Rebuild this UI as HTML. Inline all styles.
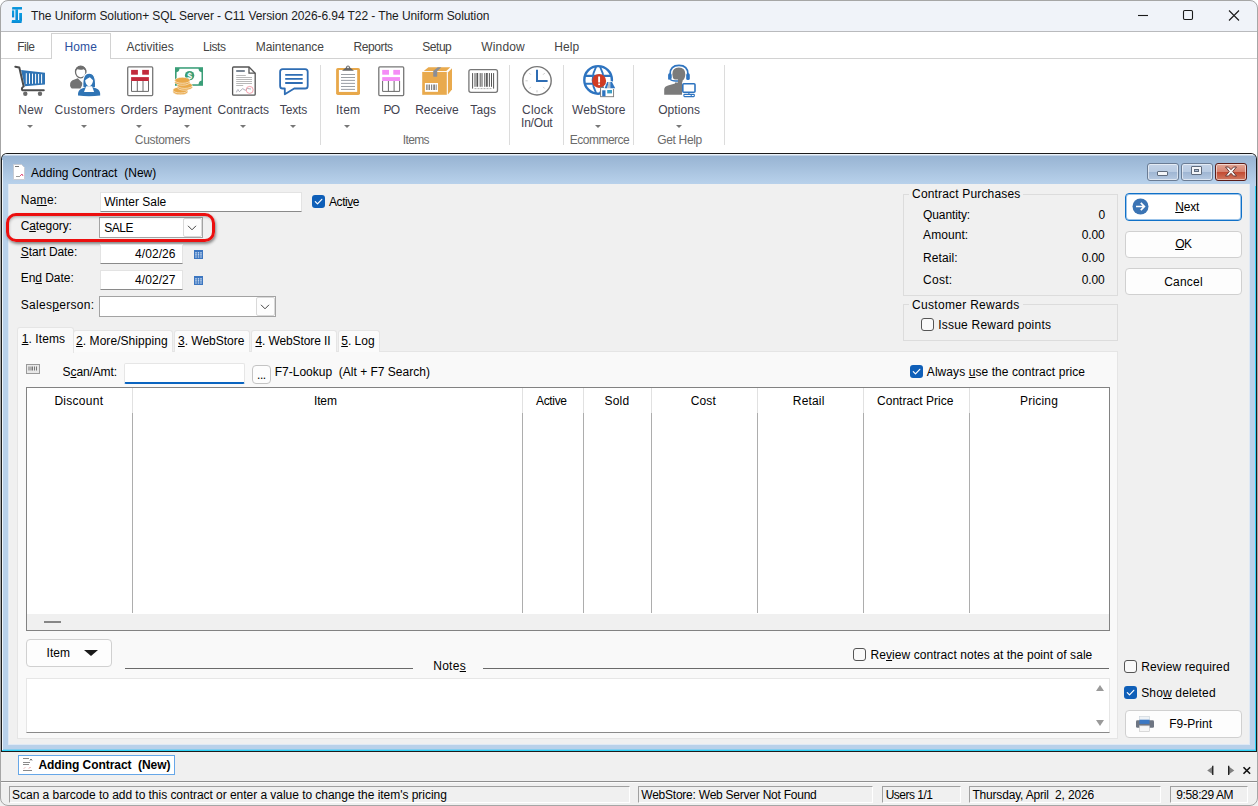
<!DOCTYPE html>
<html>
<head>
<meta charset="utf-8">
<title>The Uniform Solution</title>
<style>
*{box-sizing:border-box;margin:0;padding:0}
html,body{width:1258px;height:806px;overflow:hidden;background:#fff}
body{font-family:"Liberation Sans",sans-serif;font-size:12px;color:#000;position:relative}
.a{position:absolute}
.t{position:absolute;white-space:nowrap;line-height:14px;height:14px}
.c{text-align:center}
.r{text-align:right}
u{text-decoration:underline;text-underline-offset:1px}
/* title bar */
#titlebar{left:0;top:0;width:1258px;height:31px;background:#f0f3f9;border-radius:8px 8px 0 0}
#titleline{left:0;top:31px;width:1258px;height:1px;background:#b9babd}
.seg{font-family:"Liberation Sans",sans-serif;font-size:12px;color:#1b1b1b}
/* menu */
.m{color:#444;font-size:12px;top:40px}
#hometab{left:51px;top:33px;width:60px;height:26px;border:1px solid #d2d2d2;border-bottom:none;background:#fff}
.mline{height:1px;background:#d2d2d2;top:58px}
/* ribbon */
.rl{color:#43434f;font-size:12px;top:103px}
.gl{color:#6b6b6b;font-size:12px;top:133px}
.sep{width:1px;background:#dcdcdc;top:65px;height:80px}
.dd{width:0;height:0;border-left:3px solid transparent;border-right:3px solid transparent;border-top:3px solid #777;top:125px}
/* child window */
#child{left:2px;top:153px;width:1255px;height:599px;background:#b9d1ea}
/* form */
.f{font-size:12px;color:#000}
.inp{background:#fff;border:1px solid #e3e3e3;border-bottom:1px solid #8a8a8a}
.btn{background:#fdfdfd;border:1px solid #d0d0d0;border-radius:4px}
.cb{width:13px;height:13px;border:1px solid #555;border-radius:3px;background:#f9f9f9}
.cbc{width:13px;height:13px;border-radius:3px;background:#0f5fb8}
.grp{border:1px solid #dcdcdc}
.vl{width:1px;background:#adadad;top:388px;height:225px}
.sb{font-size:12px;color:#000;top:788px}
.sunk{border:1px solid;border-color:#a0a0a0 #fff #fff #a0a0a0;top:786px;height:17px}

.capb{top:163px;width:32px;height:18px;border:1px solid #6a7c94;border-radius:3px;background:linear-gradient(#c4d4e8 0,#b9cbe2 48%,#9fb6d3 52%,#b6c9e1 100%);box-shadow:inset 0 0 0 1px rgba(255,255,255,.55)}
.capx{border-color:#5a1c18;background:linear-gradient(#e3a898 0,#d6826f 48%,#c24a32 52%,#d17a62 100%)}
.tab{top:330px;height:22px;background:#fbfbfb;border:1px solid #e5e5e5;border-bottom:none;border-radius:3px 3px 0 0}
.vh{width:1px;background:#e1e1e1;top:388px;height:25px}
/*AUTO*/
#title,#m_File,#m_Home,#m_Activities,#m_Lists,#m_Maintenance,#m_Reports,#m_Setup,#m_Window,#m_Help,#x1,#x2,#x3,#x4,#x5,#x6,#x7,#x8,#x9,#x10,#x11,#x12,#x13,#x14,#x15,#x16,#x17,#x18,#ctitle,#x19,#x20,#x21,#x22,#x23,#x24,#x25,#x26,#x27,#x28,#x29,#x30,#x31,#x32,#x33,#x34,#x35,#x36,#x37,#x38,#x39,#x40,#x41,#x42,#x43,#x44,#x45,#x46,#x47,#x48,#x50,#x51,#x52,#x53,#x54,#x55,#x56,#x57,#x58,#x59,#x60,#x61,#x62,#x63,#x64,#x65,#tasktab,#sb1,#sb2,#sb3,#sb4,#sb5{width:auto !important;text-align:left !important}
#title{left:31.0px !important;letter-spacing:-0.077px}
#m_File{left:17.2px !important;letter-spacing:-0.515px}
#m_Home{left:64.4px !important;letter-spacing:0.195px}
#m_Activities{left:126.4px !important;letter-spacing:0.006px}
#m_Lists{left:203.0px !important;letter-spacing:-0.422px}
#m_Maintenance{left:255.7px !important;letter-spacing:-0.052px}
#m_Reports{left:353.6px !important;letter-spacing:-0.422px}
#m_Setup{left:422.3px !important;letter-spacing:-0.465px}
#m_Window{left:481.3px !important;letter-spacing:0.162px}
#m_Help{left:554.3px !important;letter-spacing:0.071px}
#x1{left:18.3px !important;letter-spacing:0.192px}
#x2{left:54.4px !important;letter-spacing:0.323px}
#x3{left:120.8px !important;letter-spacing:0.042px}
#x4{left:164.1px !important;letter-spacing:0.023px}
#x5{left:217.5px !important;letter-spacing:0.030px}
#x6{left:279.8px !important;letter-spacing:-0.129px}
#x7{left:336.0px !important;letter-spacing:0.252px}
#x8{left:383.4px !important;letter-spacing:-0.644px}
#x9{left:415.2px !important;letter-spacing:0.007px}
#x10{left:470.3px !important;letter-spacing:0.114px}
#x11{left:522.0px !important;letter-spacing:0.246px}
#x12{left:521.0px !important;letter-spacing:-0.197px}
#x13{left:572.1px !important;letter-spacing:0.037px}
#x14{left:658.2px !important;letter-spacing:0.073px}
#x15{left:134.8px !important;letter-spacing:-0.314px}
#x16{left:402.8px !important;letter-spacing:-0.661px}
#x17{left:569.7px !important;letter-spacing:-0.489px}
#x18{left:657.2px !important;letter-spacing:-0.323px}
#ctitle{left:31.0px !important;letter-spacing:0.028px}
#x19{left:20.7px !important;letter-spacing:0.285px}
#x20{left:104.3px !important;letter-spacing:-0.003px}
#x21{left:329.1px !important;letter-spacing:-0.481px}
#x22{left:20.7px !important;letter-spacing:-0.106px}
#x23{left:104.3px !important;letter-spacing:-0.496px}
#x24{left:20.7px !important;letter-spacing:-0.078px}
#x25{left:135.1px !important;letter-spacing:0.059px}
#x26{left:20.7px !important;letter-spacing:-0.036px}
#x27{left:135.1px !important;letter-spacing:0.059px}
#x28{left:20.7px !important;letter-spacing:0.302px}
#x29{left:909.1px !important;letter-spacing:0.165px}
#x30{left:923.1px !important;letter-spacing:-0.116px}
#x31{left:923.1px !important;letter-spacing:0.066px}
#x32{left:923.1px !important;letter-spacing:0.064px}
#x33{left:923.1px !important;letter-spacing:0.271px}
#x34{left:1098.4px !important;letter-spacing:-0.488px}
#x35{left:1081.7px !important;letter-spacing:-0.153px}
#x36{left:1081.7px !important;letter-spacing:-0.153px}
#x37{left:1081.7px !important;letter-spacing:-0.153px}
#x38{left:909.1px !important;letter-spacing:0.300px}
#x39{left:938.2px !important;letter-spacing:0.226px}
#x40{left:1175.2px !important;letter-spacing:-0.196px}
#x41{left:1175.2px !important;letter-spacing:-0.659px}
#x42{left:1164.2px !important;letter-spacing:0.208px}
#x43{left:21.7px !important;letter-spacing:0.100px}
#x44{left:76.1px !important;letter-spacing:0.051px}
#x45{left:178.0px !important;letter-spacing:-0.010px}
#x46{left:255.4px !important;letter-spacing:-0.100px}
#x47{left:341.2px !important;letter-spacing:0.002px}
#x48{left:62.6px !important;letter-spacing:-0.122px}
#x50{left:274.7px !important;letter-spacing:0.005px}
#x51{left:926.8px !important;letter-spacing:0.075px}
#x52{left:54.4px !important;letter-spacing:0.273px}
#x53{left:314.0px !important;letter-spacing:-0.148px}
#x54{left:536.0px !important;letter-spacing:-0.338px}
#x55{left:604.5px !important;letter-spacing:0.190px}
#x56{left:690.7px !important;letter-spacing:0.171px}
#x57{left:792.8px !important;letter-spacing:0.163px}
#x58{left:877.0px !important;letter-spacing:0.028px}
#x59{left:1020.0px !important;letter-spacing:0.202px}
#x60{left:46.6px !important;letter-spacing:0.052px}
#x61{left:433.2px !important;letter-spacing:0.285px}
#x62{left:870.6px !important;letter-spacing:0.054px}
#x63{left:1141.2px !important;letter-spacing:0.120px}
#x64{left:1141.2px !important;letter-spacing:0.151px}
#x65{left:1169.2px !important;letter-spacing:0.030px}
#tasktab{left:38.4px !important;letter-spacing:-0.063px}
#sb1{left:12.1px !important;letter-spacing:-0.038px}
#sb2{left:641.3px !important;letter-spacing:-0.235px}
#sb3{left:885.7px !important;letter-spacing:-0.520px}
#sb4{left:972.4px !important;letter-spacing:-0.181px}
#sb5{left:1176.3px !important;letter-spacing:-0.380px}
/*ENDAUTO*/
</style>
</head>
<body>
<!-- TITLE BAR -->
<div class="a" id="titlebar"></div>
<div class="a" id="titleline"></div>
<div class="t seg" style="left:31px;top:9px" id="title">The Uniform Solution+ SQL Server - C11 Version 2026-6.94 T22 - The Uniform Solution</div>

<svg class="a" style="left:11px;top:6px" width="12" height="18" viewBox="11 6 12 18"><defs><linearGradient id="lg" x1="0" y1="0" x2="0" y2="1"><stop offset="0" stop-color="#0a9fe3"/><stop offset="1" stop-color="#0b86d2"/></linearGradient></defs><g fill="url(#lg)"><path d="M12.300 7H22V9.500H12z"/><rect x="12" y="10.400" width="2.200" height="7"/><rect x="15.400" y="9.400" width="2.600" height="11"/><rect x="19.200" y="13" width="2.800" height="8"/><path d="M12 20H22L21.500 23H11.500z"/></g></svg>
<!-- window controls -->
<svg class="a" style="left:1130px;top:5px" width="120" height="22" viewBox="1130 5 120 22"><path d="M1138 15.500h10" stroke="#1a1a1a" stroke-width="1.100"/><rect x="1183.500" y="10.500" width="9" height="9" rx="1.200" fill="none" stroke="#1a1a1a" stroke-width="1.100"/><path d="M1229 10.500l10 10M1239 10.500l-10 10" stroke="#1a1a1a" stroke-width="1.100"/></svg>
<!-- MENU -->
<div class="a mline" style="left:0;width:52px"></div>
<div class="a mline" style="left:110px;width:1148px"></div>
<div class="a" id="hometab"></div>
<div class="t m" id="m_File" style="left:17px">File</div>
<div class="t m" id="m_Home" style="left:64px;color:#2b4f9e">Home</div>
<div class="t m" id="m_Activities" style="left:126px">Activities</div>
<div class="t m" id="m_Lists" style="left:203px">Lists</div>
<div class="t m" id="m_Maintenance" style="left:255px">Maintenance</div>
<div class="t m" id="m_Reports" style="left:353px">Reports</div>
<div class="t m" id="m_Setup" style="left:421px">Setup</div>
<div class="t m" id="m_Window" style="left:481px">Window</div>
<div class="t m" id="m_Help" style="left:554px">Help</div>

<!-- RIBBON -->

<!-- ribbon labels -->
<div id="x1" class="t rl c" style="left:0;width:60px">New</div>
<div id="x2" class="t rl c" style="left:44px;width:80px">Customers</div>
<div id="x3" class="t rl c" style="left:110px;width:60px">Orders</div>
<div id="x4" class="t rl c" style="left:158px;width:60px">Payment</div>
<div id="x5" class="t rl c" style="left:203px;width:80px">Contracts</div>
<div id="x6" class="t rl c" style="left:263px;width:60px">Texts</div>
<div id="x7" class="t rl c" style="left:317px;width:60px">Item</div>
<div id="x8" class="t rl c" style="left:361px;width:60px">PO</div>
<div id="x9" class="t rl c" style="left:407px;width:60px">Receive</div>
<div id="x10" class="t rl c" style="left:453px;width:60px">Tags</div>
<div id="x11" class="t rl c" style="left:507px;width:60px">Clock</div>
<div id="x12" class="t rl c" style="left:507px;width:60px;top:116px">In/Out</div>
<div id="x13" class="t rl c" style="left:558px;width:80px">WebStore</div>
<div id="x14" class="t rl c" style="left:649px;width:60px">Options</div>
<div class="a dd" style="left:27px"></div>
<div class="a dd" style="left:81px"></div>
<div class="a dd" style="left:136px"></div>
<div class="a dd" style="left:184px"></div>
<div class="a dd" style="left:240px"></div>
<div class="a dd" style="left:290px"></div>
<div class="a dd" style="left:344px"></div>
<div class="a dd" style="left:595px"></div>
<div class="a dd" style="left:676px"></div>
<div id="x15" class="t gl c" style="left:122px;width:80px">Customers</div>
<div id="x16" class="t gl c" style="left:376px;width:80px">Items</div>
<div id="x17" class="t gl c" style="left:559px;width:80px">Ecommerce</div>
<div id="x18" class="t gl c" style="left:639px;width:80px">Get Help</div>
<div class="a sep" style="left:320px"></div>
<div class="a sep" style="left:509px"></div>
<div class="a sep" style="left:563px"></div>
<div class="a sep" style="left:633px"></div>
<div class="a sep" style="left:724px"></div>
<!-- ICONS -->

<!-- cart : origin (14,64) -->
<svg class="a" style="left:14px;top:64px" width="34" height="34" viewBox="14 64 34 34">
<path d="M21.100 69.900L45 72.700V84.600L24.700 86.200z" fill="#2f74b5"/>
<path d="M26.300 73.200v10.800M29.500 73.400v10.400M32.500 73.600v10.200M35.600 73.800v9.800M38.600 74v9.400M41.600 74.200v9.200" stroke="#fff" stroke-width="1"/>
<path d="M15.300 66.800L19.300 67.600 23.700 86.500Q21 88 22.300 90.200H43.800" fill="none" stroke="#4d4d4d" stroke-width="2" stroke-linecap="round" stroke-linejoin="round"/>
<circle cx="25.300" cy="93.800" r="2.200" fill="#6a6a6a"/><circle cx="40" cy="93.800" r="2.200" fill="#6a6a6a"/>
</svg>
<!-- customers -->
<svg class="a" style="left:68px;top:64px" width="34" height="34" viewBox="68 64 34 34">
<path d="M77.800 78.300L72.500 80.300Q69.800 81.800 70.100 85.400Q70.400 88.300 73 88.600L80.500 88.400 83 83.500z" fill="#737373"/>
<ellipse cx="80.700" cy="72" rx="5.200" ry="5.800" fill="#fff" stroke="#6e6e6e" stroke-width="1.300"/>
<path d="M75.300 72.500Q74.800 66 80.700 66Q86.600 66 86.100 72.500Q85.500 70 83.800 69.200Q80.500 70.300 77.300 69.300Q75.800 70.300 75.300 72.500z" fill="#6e6e6e"/>
<path d="M82.900 87.500Q82 73.100 89.200 73.100Q96.400 73.100 95.500 87.500z" fill="#2f74b5" stroke="#fff" stroke-width="1.100"/>
<path d="M78 95.600Q77.600 90 82 88.600L86.500 86.800H91.900L96.400 88.600Q100.600 90 100.200 95.600Q89 96.800 78 95.600z" fill="#2f74b5"/>
<path d="M85.200 80.200Q87 78.600 89.800 77.300Q91.500 78.800 93 80.200Q93 84.700 89.100 86.400Q85.200 84.700 85.200 80.200z" fill="#fff"/>
<path d="M84 92L86.200 86.300H92.100L94.100 92z" fill="#fff"/>
</svg>
<!-- orders -->
<svg class="a" style="left:126px;top:65px" width="29" height="32" viewBox="126 65 29 32">
<rect x="127.700" y="66.900" width="25" height="28.700" rx="1" fill="#fff" stroke="#777" stroke-width="1.300"/>
<rect x="131.100" y="69.900" width="6.800" height="4.800" fill="#c22a3c"/><rect x="142.200" y="69.900" width="6.700" height="4.800" fill="#c22a3c"/>
<rect x="131.100" y="77.100" width="17.800" height="3.900" fill="#c22a3c"/>
<path d="M131.500 81v10.400h17V81M137.300 81v10.400M143 81v10.400" fill="none" stroke="#6a6a6a" stroke-width="1"/>
</svg>
<!-- payment -->
<svg class="a" style="left:172px;top:65px" width="33" height="32" viewBox="172 65 33 32">
<rect x="175" y="67.200" width="28" height="18.600" fill="#3a9e78"/>
<path d="M179.500 68.800H198.500Q199 72 201.500 72.200V80.600Q199 81 198.500 84.200H179.500Q179 81 176.600 80.600V72.200Q179 72 179.500 68.800z" fill="#fff"/>
<circle cx="189.600" cy="75.600" r="4.700" fill="#3a9e78"/>
<text x="189.600" y="79" font-size="8.500" font-weight="bold" text-anchor="middle" fill="#fff" font-family="Liberation Sans, sans-serif">$</text>
<g fill="#e9a94a" stroke="#fff" stroke-width=".55">
<ellipse cx="180.400" cy="91.800" rx="7.600" ry="3"/><ellipse cx="180.400" cy="90" rx="7.600" ry="3"/>
<ellipse cx="184.800" cy="87.200" rx="7.600" ry="3"/><ellipse cx="184.800" cy="85.400" rx="7.600" ry="3"/>
<ellipse cx="182.400" cy="82.200" rx="7.600" ry="3"/><ellipse cx="182.400" cy="80.300" rx="7.600" ry="3"/>
</g>
</svg>
<!-- contracts -->
<svg class="a" style="left:230px;top:65px" width="28" height="32" viewBox="230 65 28 32">
<path d="M233.600 67H249L255.200 73.200V94.200Q255.200 95.200 254.200 95.200H233.600Q232.600 95.200 232.600 94.200V68Q232.600 67 233.600 67z" fill="#fff" stroke="#555" stroke-width="1.300"/>
<path d="M249 67V73.200H255.200" fill="none" stroke="#555" stroke-width="1.300"/>
<path d="M236.200 71h8.600" stroke="#73808f" stroke-width="1.900"/>
<path d="M236.200 75.500h9.600M236.200 77.500h15.800M236.200 79.500h15.800M236.200 81.500h15.800M236.200 83.500h15.800M236.200 85.500h7" stroke="#a7a7a7" stroke-width=".8"/>
<path d="M236.500 92.300Q238 88 238.500 90.500T241 90.200T244 89.500T247.500 88.500L251 89" fill="none" stroke="#8a8a98" stroke-width=".7"/>
<circle cx="249.700" cy="89.900" r="3.500" fill="none" stroke="#f08a9a" stroke-width=".8"/>
</svg>
<!-- texts -->
<svg class="a" style="left:277px;top:66px" width="34" height="31" viewBox="277 66 34 31">
<path d="M282.700 69.200H305.100Q307.700 69.200 307.700 71.800V85.900Q307.700 88.500 305.100 88.500H294.200L284.800 94.300V88.500H282.700Q280.100 88.500 280.100 85.900V71.800Q280.100 69.200 282.700 69.200z" fill="#fff" stroke="#2e6db4" stroke-width="1.800" stroke-linejoin="round"/>
<path d="M285.200 74.900h17.500M285.200 78.900h17.500M285.200 83h17.500" stroke="#2e6db4" stroke-width="1.800"/>
</svg>
<!-- item clipboard -->
<svg class="a" style="left:335px;top:64px" width="27" height="33" viewBox="335 64 27 33">
<rect x="336.100" y="68" width="23.900" height="27" rx="1.800" fill="#e8a84a"/>
<rect x="338.900" y="70" width="18.300" height="21.900" fill="#fff"/>
<path d="M342 70.800L346 67.500Q346.200 65.500 348 65.500T350 67.500L354 70.800z" fill="#666"/>
<circle cx="348" cy="67.300" r=".9" fill="#fff"/>
<path d="M341 74.500h14M341 77.500h14M341 80.400h14M341 83.400h14M341 86.500h14M341 89.400h14" stroke="#8f949b" stroke-width=".9"/>
</svg>
<!-- PO -->
<svg class="a" style="left:377px;top:65px" width="29" height="32" viewBox="377 65 29 32">
<rect x="378.800" y="66.900" width="24.900" height="28.700" rx="1" fill="#fff" stroke="#777" stroke-width="1.300"/>
<rect x="382.200" y="69.900" width="6.800" height="4.800" fill="#f48cf6"/><rect x="393.300" y="69.900" width="6.700" height="4.800" fill="#f48cf6"/>
<rect x="382.200" y="77.100" width="17.800" height="3.900" fill="#f48cf6"/>
<path d="M382.600 81v10.400h17V81M388.400 81v10.400M394.100 81v10.400" fill="none" stroke="#6a6a6a" stroke-width="1"/>
</svg>
<!-- receive box -->
<svg class="a" style="left:421px;top:66px" width="32" height="30" viewBox="421 66 32 30">
<path d="M422.200 71.900H446.800V94.800H422.200z" fill="#e9aa4d"/>
<path d="M423.800 70.900L428.400 67.200H450.400L446.300 70.900z" fill="#e9aa4d"/>
<path d="M447.900 72.400L452 68.300V89.400L447.900 94.600z" fill="#e9aa4d"/>
<path d="M437.800 67.200H441.400L437.200 70.900V76.400Q435.200 77.200 433.200 76.400V70.900z" fill="#8a8e96"/>
<rect x="424.900" y="83" width="13.100" height="8.800" fill="#fff"/>
<path d="M426.700 84.500v5.500M428 84.500v5.500M429.500 84.500v5.500M431.500 84.500v5.500M433.300 84.500v5.500M434.500 84.500v5.500M436.200 84.500v5.500" stroke="#777" stroke-width=".9"/>
</svg>
<!-- tags -->
<svg class="a" style="left:467px;top:68px" width="33" height="27" viewBox="467 68 33 27">
<rect x="468.900" y="69.700" width="28.600" height="22.600" rx="2" fill="#fff" stroke="#777" stroke-width="1.300"/>
<path d="M472.600 73.100v15.500M493.600 73.100v15.500" stroke="#555" stroke-width="1"/>
<path d="M475 73.100v13.700M480.200 73.100v13.700M482 73.100v13.700M484.800 73.100v13.700M489.400 73.100v13.700M491.500 73.100v13.700" stroke="#555" stroke-width="1"/>
<path d="M477.300 73.100v13.700M486.900 73.100v13.700" stroke="#555" stroke-width="1.700"/>
<path d="M474.500 88.600h17.500" stroke="#999" stroke-width=".8" stroke-dasharray="2 1"/>
</svg>
<!-- clock -->
<svg class="a" style="left:521px;top:65px" width="32" height="32" viewBox="521 65 32 32">
<circle cx="537" cy="80.800" r="14.200" fill="#fff" stroke="#777" stroke-width="1.400"/>
<path d="M529.300 73.100l1.600 1.600M544.700 73.100l-1.600 1.600M529.300 88.500l1.600-1.600M544.700 88.500l-1.600-1.600M525.500 80.800h2.200M537 90.200v2.200" stroke="#c9c9c9" stroke-width="1"/>
<path d="M537 69.700V81H547.600" fill="none" stroke="#2e6db4" stroke-width="2"/>
</svg>
<!-- webstore -->
<svg class="a" style="left:582px;top:64px" width="34" height="34" viewBox="582 64 34 34">
<circle cx="598.100" cy="79.900" r="13.800" fill="#fff" stroke="#2e74c0" stroke-width="2.400"/>
<path d="M585 75.900h26.200M585 83.800h26.200" stroke="#2e74c0" stroke-width="2.100"/>
<path d="M596.200 66.500Q589 80 596.200 93.300M600 66.500Q607.200 80 600 93.300" fill="none" stroke="#2e74c0" stroke-width="1.800"/>
<circle cx="599.100" cy="80.900" r="7" fill="#d13b22"/>
<path d="M599.100 76.500v6" stroke="#fff" stroke-width="1.900"/><rect x="598.200" y="83.500" width="1.800" height="1.600" fill="#fff"/>
<rect x="600.600" y="87.500" width="13" height="9.200" fill="#fff" stroke="#777" stroke-width=".9"/>
<path d="M604.600 88.300L607.200 82H612L615.200 88.300z" fill="#fff" stroke="#fff" stroke-width="1.600"/>
<path d="M604.600 88.300L607.200 82H608.600L607.200 88.300z" fill="#2e74c0"/><path d="M607.200 88.300L608.600 82H610.300L610.300 88.300z" fill="#b8bcc4"/><path d="M610.300 88.300V82H612L615.200 88.300z" fill="#2e74c0"/>
<rect x="602.200" y="90.300" width="3.300" height="6" fill="#2e74c0"/>
<rect x="607.200" y="90" width="4.800" height="3.400" fill="#3a9ec6"/>
</svg>
<!-- options -->
<svg class="a" style="left:662px;top:64px" width="36" height="34" viewBox="662 64 36 34">
<path d="M664.200 94.800V89.500Q664.200 86.500 668 85.500L675 83.500V80.500Q672.300 78.200 672.300 74.200Q672.300 67.600 678.800 67.600Q685.300 67.600 685.300 74.200Q685.300 78.500 682.500 80.800V83.500H682V94.800z" fill="#7b7b7b"/>
<path d="M670.100 75.500V74Q670.100 65.300 679 65.300Q687.900 65.300 687.900 74V75.500" fill="none" stroke="#2e74c0" stroke-width="1.700"/>
<rect x="668.100" y="73.300" width="3.600" height="6.800" rx="1.600" fill="#2e74c0"/><rect x="686.200" y="73.300" width="3.600" height="6.800" rx="1.600" fill="#2e74c0"/>
<path d="M670.300 79.200Q671.300 81 675.500 81H678" fill="none" stroke="#fff" stroke-width="3"/>
<path d="M670.300 79.200Q671.300 81 675.500 81H678" fill="none" stroke="#2e74c0" stroke-width="1.300"/>
<rect x="682" y="82.300" width="15.200" height="11.200" fill="#fff"/>
<rect x="682.800" y="83.700" width="12.200" height="8.600" rx="1" fill="#fff" stroke="#2e74c0" stroke-width="1.600"/>
<rect x="683.900" y="94.400" width="10.400" height="2.200" rx=".6" fill="#fff" stroke="#2e74c0" stroke-width="1.100"/>
<path d="M688.900 92.300v2M691.200 94.400v2.200" stroke="#2e74c0" stroke-width="1.100"/>
</svg>



<!-- CHILD WINDOW -->

<!-- CHILD WINDOW FRAME -->
<div class="a" style="left:1px;top:153px;width:1256px;height:599px;background:#1c1c1c;border-radius:6px 6px 0 0"></div>
<div class="a" style="left:2px;top:154px;width:1254px;height:597px;background:#b9d1ea;border-radius:5px 5px 0 0"></div>
<div class="a" style="left:2px;top:154px;width:1254px;height:31px;border-radius:5px 5px 0 0;background:linear-gradient(#eaf1f9 0,#eaf1f9 1px,#98b4d3 2px,#a3bedb 12px,#afc9e4 22px,#b8d1eb 30px)"></div>
<div class="a" style="left:2px;top:749px;width:1254px;height:1px;background:#86cdee"></div><div class="a" style="left:2px;top:750px;width:1254px;height:1px;background:#2fd2f6"></div><div class="a" style="left:1255px;top:186px;width:1px;height:565px;background:#2fd2f6"></div><div class="a" style="left:2px;top:160px;width:1px;height:590px;background:#eef5fc"></div>
<!-- client -->
<div class="a" style="left:8px;top:184px;width:1242px;height:561px;background:#dfe9f5"></div>
<div class="a" style="left:9px;top:184px;width:1240px;height:560px;background:#f0f0f0"></div>
<!-- child title -->
<div class="t" style="left:31px;top:166px;font-size:12px;color:#000" id="ctitle">Adding Contract&nbsp; (New)</div>
<svg class="a" style="left:12px;top:164px" width="14" height="16" viewBox="0 0 14 16"><path d="M1.5 .5h8l3 3v12h-11z" fill="#fff" stroke="#c8ccd4" stroke-width="1"/><path d="M3 2.5h4" stroke="#777" stroke-width="1"/><path d="M4 12.5h4" stroke="#999" stroke-width="1"/><path d="M8 12l2-2 1 2" stroke="#e0507a" stroke-width="1" fill="none"/></svg>
<!-- caption buttons -->
<div class="a capb" style="left:1147px"></div>
<div class="a capb" style="left:1181px"></div>
<div class="a capb capx" style="left:1215px"></div>
<div class="a" style="left:1157px;top:171px;width:11px;height:5px;background:#f4f6f9;border:1px solid #5f6b7c;border-radius:1px"></div>
<div class="a" style="left:1191px;top:166px;width:11px;height:9px;background:#f4f6f9;border:1px solid #5f6b7c;border-radius:1px"></div>
<div class="a" style="left:1194px;top:169px;width:5px;height:3px;background:#aebcd0;border:1px solid #5f6b7c"></div>
<svg class="a" style="left:1224px;top:166px" width="14" height="11" viewBox="0 0 14 11"><path d="M1.5 1h3L7 3.7 9.500 1h3L8.800 5.500 12.500 10h-3L7 7.300 4.500 10h-3L5.200 5.500z" fill="#f6f6f6" stroke="#6b3a36" stroke-width="1" stroke-linejoin="round"/></svg>

<!-- FORM -->
<div id="x19" class="t f" style="left:20px;top:193px">Na<u>m</u>e:</div>
<div class="a inp" style="left:100px;top:192px;width:202px;height:20px"></div>
<div id="x20" class="t f" style="left:104px;top:195px">Winter Sale</div>
<div class="a cbc" style="left:312px;top:195px"></div>
<svg class="a" style="left:312px;top:195px" width="13" height="13" viewBox="0 0 13 13"><path d="M3.300 6.700l2.200 2.200 4.300-4.600" fill="none" stroke="#fff" stroke-width="1.200" stroke-linecap="round" stroke-linejoin="round"/></svg>
<div id="x21" class="t f" style="left:329px;top:195px">Acti<u>v</u>e</div>

<div id="x22" class="t f" style="left:20px;top:219px">C<u>a</u>tegory:</div>
<div class="a" style="left:99px;top:217px;width:104px;height:21px;background:#fff;border:1px solid #a3a3a3"></div>
<div class="a" style="left:183px;top:218px;width:19px;height:19px;background:#fdfdfd;border:1px solid #d9d9d9;border-radius:2px"></div>
<svg class="a" style="left:187px;top:225px" width="10" height="6" viewBox="0 0 10 6"><path d="M1 .8l4 4 4-4" fill="none" stroke="#444" stroke-width="1"/></svg>
<div id="x23" class="t f" style="left:104px;top:221px">SALE</div>
<!-- red highlight -->
<div class="a" style="left:6px;top:213px;width:209px;height:29px;border:3px solid #ec0f0f;border-radius:10px;box-shadow:1px 2px 3px rgba(0,0,0,.45),inset 1px 2px 3px -1px rgba(0,0,0,.3)"></div>

<div id="x24" class="t f" style="left:20px;top:245px"><u>S</u>tart Date:</div>
<div class="a inp" style="left:100px;top:244px;width:83px;height:20px"></div>
<div id="x25" class="t f r" style="left:100px;width:76px;top:247px">4/02/26</div>
<div id="x26" class="t f" style="left:20px;top:271px">En<u>d</u> Date:</div>
<div class="a inp" style="left:100px;top:270px;width:83px;height:20px"></div>
<div id="x27" class="t f r" style="left:100px;width:76px;top:273px">4/02/27</div>
<svg class="a cal" style="left:193px;top:249px" width="10" height="10" viewBox="0 0 10 10"><rect x="1" y="1" width="9" height="9" fill="#3c76c0"/><path d="M2.300 3.800h1.400M4.800 3.800h1.400M7.300 3.800h1.400M2.300 5.900h1.400M4.800 5.900h1.400M7.300 5.900h1.400M2.300 8h1.400M4.800 8h1.400M7.300 8h1.400" stroke="#eaf2fb" stroke-width="1.200"/></svg>
<svg class="a cal" style="left:193px;top:275px" width="10" height="10" viewBox="0 0 10 10"><rect x="1" y="1" width="9" height="9" fill="#3c76c0"/><path d="M2.300 3.800h1.400M4.800 3.800h1.400M7.300 3.800h1.400M2.300 5.900h1.400M4.800 5.900h1.400M7.300 5.900h1.400M2.300 8h1.400M4.800 8h1.400M7.300 8h1.400" stroke="#eaf2fb" stroke-width="1.200"/></svg>

<div id="x28" class="t f" style="left:20px;top:298px">Sales<u>p</u>erson:</div>
<div class="a" style="left:99px;top:296px;width:177px;height:21px;background:#fff;border:1px solid #a3a3a3"></div>
<div class="a" style="left:256px;top:297px;width:19px;height:19px;background:#fdfdfd;border:1px solid #d9d9d9;border-radius:2px"></div>
<svg class="a" style="left:260px;top:304px" width="10" height="6" viewBox="0 0 10 6"><path d="M1 .8l4 4 4-4" fill="none" stroke="#444" stroke-width="1"/></svg>

<!-- right groupboxes -->
<div class="a grp" style="left:903px;top:194px;width:215px;height:102px"></div>
<div id="x29" class="t f" style="left:909px;top:187px;background:#f0f0f0;padding:0 3px">Contract Purchases</div>
<div id="x30" class="t f" style="left:923px;top:208px">Quantity:</div>
<div id="x31" class="t f" style="left:923px;top:228px">Amount:</div>
<div id="x32" class="t f" style="left:923px;top:251px">Retail:</div>
<div id="x33" class="t f" style="left:923px;top:273px">Cost:</div>
<div id="x34" class="t f r" style="left:1044px;width:61px;top:208px">0</div>
<div id="x35" class="t f r" style="left:1044px;width:61px;top:228px">0.00</div>
<div id="x36" class="t f r" style="left:1044px;width:61px;top:251px">0.00</div>
<div id="x37" class="t f r" style="left:1044px;width:61px;top:273px">0.00</div>
<div class="a grp" style="left:903px;top:304px;width:215px;height:37px"></div>
<div id="x38" class="t f" style="left:909px;top:298px;background:#f0f0f0;padding:0 3px">Customer Rewards</div>
<div class="a cb" style="left:921px;top:318px"></div>
<div id="x39" class="t f" style="left:938px;top:318px">Issue Reward points</div>

<!-- right buttons -->
<div class="a" style="left:1125px;top:193px;width:117px;height:28px;background:#fff;border:1px solid #1071c8;border-radius:4px;box-shadow:inset 0 0 0 1px #9cc4ea"></div>
<svg class="a" style="left:1132px;top:198px" width="17" height="17" viewBox="0 0 17 17"><circle cx="8.500" cy="8.500" r="8" fill="#3b74b4"/><path d="M4 8.500h8M8.800 4.800l3.600 3.700-3.600 3.700" fill="none" stroke="#fff" stroke-width="1.700"/></svg>
<div id="x40" class="t f" style="left:1175px;top:200px"><u>N</u>ext</div>
<div class="a btn" style="left:1125px;top:231px;width:117px;height:27px"></div>
<div id="x41" class="t f c" style="left:1125px;width:117px;top:237px"><u>O</u>K</div>
<div class="a btn" style="left:1125px;top:268px;width:117px;height:27px"></div>
<div id="x42" class="t f c" style="left:1125px;width:117px;top:275px">Cancel</div>

<!-- TABS -->
<div class="a" style="left:17px;top:351px;width:1101px;height:388px;background:#f9f9f9;border:1px solid #e5e5e5"></div>
<div class="a tab" style="left:73px;width:100px"></div>
<div class="a tab" style="left:174px;width:76px"></div>
<div class="a tab" style="left:251px;width:86px"></div>
<div class="a tab" style="left:338px;width:42px"></div>
<div class="a" style="left:17px;top:327px;width:57px;height:26px;background:#f9f9f9;border:1px solid #e5e5e5;border-bottom:none;border-radius:3px 3px 0 0"></div>
<div id="x43" class="t f" style="left:22px;top:332px"><u>1</u>. Items</div>
<div id="x44" class="t f" style="left:76px;top:334px"><u>2</u>. More/Shipping</div>
<div id="x45" class="t f" style="left:178px;top:334px"><u>3</u>. WebStore</div>
<div id="x46" class="t f" style="left:255px;top:334px"><u>4</u>. WebStore II</div>
<div id="x47" class="t f" style="left:341px;top:334px"><u>5</u>. Log</div>

<!-- scan row -->
<svg class="a" style="left:26px;top:364px" width="14" height="10" viewBox="0 0 14 10"><rect x=".5" y=".5" width="13" height="9" fill="#e8e8e8" stroke="#9a9a9a"/><path d="M3 2.500v4M5 2.500v4M6.500 2.500v4M8.500 2.500v4M10.500 2.500v4" stroke="#777" stroke-width="1"/></svg>
<div id="x48" class="t f" style="left:62px;top:365px">S<u>c</u>an/Amt:</div>
<div class="a" style="left:124px;top:363px;width:121px;height:21px;background:#fff;border:1px solid #e6e6e6;border-bottom:2px solid #0a64c0;border-radius:2px"></div>
<div class="a btn" style="left:252px;top:365px;width:19px;height:19px;border-color:#c4c4c4"></div>
<div id="x49" class="t f" style="left:257px;top:368px;letter-spacing:-.4px">...</div>
<div id="x50" class="t f" style="left:275px;top:365px">F7-Lookup&nbsp; (Alt + F7 Search)</div>
<div class="a cbc" style="left:910px;top:365px"></div>
<svg class="a" style="left:910px;top:365px" width="13" height="13" viewBox="0 0 13 13"><path d="M3.300 6.700l2.200 2.200 4.300-4.600" fill="none" stroke="#fff" stroke-width="1.200" stroke-linecap="round" stroke-linejoin="round"/></svg>
<div id="x51" class="t f" style="left:927px;top:365px">Always <u>u</u>se the contract price</div>

<!-- grid -->
<div class="a" style="left:26px;top:387px;width:1084px;height:244px;background:#fff;border:1px solid #828282"></div>
<div class="a" style="left:27px;top:614px;width:1082px;height:16px;background:#f0f0f0"></div>
<div class="a" style="left:44px;top:621px;width:17px;height:2px;background:#868686"></div>
<div class="a vl" style="left:132px"></div>
<div class="a vl" style="left:522px"></div>
<div class="a vl" style="left:583px"></div>
<div class="a vl" style="left:651px"></div>
<div class="a vl" style="left:757px"></div>
<div class="a vl" style="left:863px"></div>
<div class="a vl" style="left:969px"></div>
<div class="a" style="left:27px;top:388px;width:1082px;height:25px;background:#fff" id="ghead"></div>
<div class="a vh" style="left:132px"></div>
<div class="a vh" style="left:522px"></div>
<div class="a vh" style="left:583px"></div>
<div class="a vh" style="left:651px"></div>
<div class="a vh" style="left:757px"></div>
<div class="a vh" style="left:863px"></div>
<div class="a vh" style="left:969px"></div>
<div id="x52" class="t f c" style="left:27px;width:105px;top:394px">Discount</div>
<div id="x53" class="t f c" style="left:133px;width:389px;top:394px">Item</div>
<div id="x54" class="t f c" style="left:523px;width:60px;top:394px">Active</div>
<div id="x55" class="t f c" style="left:584px;width:67px;top:394px">Sold</div>
<div id="x56" class="t f c" style="left:652px;width:105px;top:394px">Cost</div>
<div id="x57" class="t f c" style="left:758px;width:105px;top:394px">Retail</div>
<div id="x58" class="t f c" style="left:864px;width:105px;top:394px">Contract Price</div>
<div id="x59" class="t f c" style="left:970px;width:139px;top:394px">Pricing</div>

<!-- below grid -->
<div class="a btn" style="left:26px;top:639px;width:86px;height:28px"></div>
<div id="x60" class="t f" style="left:47px;top:646px">Item</div>
<div class="a" style="left:84px;top:650px;width:0;height:0;border-left:7px solid transparent;border-right:7px solid transparent;border-top:6px solid #1a1a1a"></div>
<div class="a" style="left:125px;top:668px;width:288px;height:1px;background:#6a6a6a"></div>
<div class="a" style="left:483px;top:668px;width:626px;height:1px;background:#6a6a6a"></div>
<div id="x61" class="t f" style="left:433px;top:659px">Note<u>s</u></div>
<div class="a cb" style="left:853px;top:648px"></div>
<div id="x62" class="t f" style="left:870px;top:648px">Re<u>v</u>iew contract notes at the point of sale</div>
<div class="a" style="left:26px;top:678px;width:1084px;height:55px;background:#fff;border:1px solid #e6e6e6;border-bottom:1px solid #8a8a8a"></div>
<div class="a" style="left:1096px;top:685px;width:0;height:0;border-left:4px solid transparent;border-right:4px solid transparent;border-bottom:6px solid #9a9a9a"></div>
<div class="a" style="left:1096px;top:720px;width:0;height:0;border-left:4px solid transparent;border-right:4px solid transparent;border-top:6px solid #9a9a9a"></div>

<!-- right bottom -->
<div class="a cb" style="left:1124px;top:660px"></div>
<div id="x63" class="t f" style="left:1141px;top:660px">Review required</div>
<div class="a cbc" style="left:1124px;top:686px"></div>
<svg class="a" style="left:1124px;top:686px" width="13" height="13" viewBox="0 0 13 13"><path d="M3.300 6.700l2.200 2.200 4.300-4.600" fill="none" stroke="#fff" stroke-width="1.200" stroke-linecap="round" stroke-linejoin="round"/></svg>
<div id="x64" class="t f" style="left:1141px;top:686px">Sho<u>w</u> deleted</div>
<div class="a btn" style="left:1125px;top:710px;width:117px;height:28px"></div>
<svg class="a" style="left:1135px;top:716px" width="20" height="16" viewBox="0 0 20 16"><rect x="4.500" y=".5" width="10" height="5" fill="#eef2f6" stroke="#c9d0d8" stroke-width=".6"/><rect x="1" y="4.200" width="18" height="7.600" rx="1.300" fill="#6e7582"/><rect x="4.500" y="3.700" width="10" height="4.200" fill="#3b78c3"/><rect x="4.500" y="9.800" width="10" height="5.500" fill="#f7f7f7" stroke="#c4c4c4" stroke-width=".6"/></svg>
<div id="x65" class="t f" style="left:1169px;top:717px">F9-Print</div>


<!-- BOTTOM -->

<!-- bottom task bar -->
<div class="a" style="left:0;top:752px;width:1258px;height:54px;background:#f0f0f0"></div>
<div class="a" style="left:0;top:781px;width:1258px;height:1px;background:#8f8f8f"></div>
<div class="a" style="left:0;top:782px;width:1258px;height:1px;background:#fbfbfb"></div>
<div class="a" style="left:18px;top:755px;width:157px;height:20px;background:#fff;border:1px solid #66a7e8"></div>
<svg class="a" style="left:22px;top:757px" width="11" height="15" viewBox="0 0 11 15"><path d="M1 1.500h6M1 5.500h7M1 7.500h6M1 13.500h9" stroke="#8a8a8a" stroke-width="1"/><path d="M8 3.500l1-1.500 1 1.500" stroke="#666" fill="none"/><path d="M2 11.500l1-1 M7 11.500l1.500-1.500" stroke="#d88" stroke-width="1"/></svg>
<div class="t" style="left:38px;top:758px;font-weight:bold;font-size:12px" id="tasktab">Adding Contract&nbsp; (New)</div>
<svg class="a" style="left:1205px;top:764px" width="48" height="12" viewBox="0 0 48 12"><path d="M8 2.300v8.200l-5.800-4.100z" fill="#808080"/><path d="M7.800 1.800v9.200" stroke="#111" stroke-width="1.200"/><path d="M23.500 2.300v8.200l5.800-4.100z" fill="#808080"/><path d="M23.700 1.800v9.200" stroke="#111" stroke-width="1.200"/><path d="M38.500 3.200l6.600 6.600M45.100 3.200l-6.600 6.600" stroke="#111" stroke-width="1.600"/></svg>
<!-- status bar -->
<div class="a sunk" style="left:9px;width:621px"></div>
<div class="a sunk" style="left:638px;width:235px"></div>
<div class="a sunk" style="left:882px;width:79px"></div>
<div class="a sunk" style="left:969px;width:192px"></div>
<div class="a sunk" style="left:1170px;width:78px"></div>
<div class="t sb" style="left:12px" id="sb1">Scan a barcode to add to this contract or enter a value to change the item's pricing</div>
<div class="t sb" style="left:641px" id="sb2">WebStore: Web Server Not Found</div>
<div class="t sb" style="left:886px" id="sb3">Users 1/1</div>
<div class="t sb" style="left:972px" id="sb4">Thursday, April&nbsp; 2, 2026</div>
<div class="t sb" style="left:1177px" id="sb5">9:58:29 AM</div>

<div class="a" style="left:0;top:0;width:1258px;height:806px;border:1px solid #a6a6a6;border-radius:8px;pointer-events:none;z-index:50"></div>
</body>
</html>
